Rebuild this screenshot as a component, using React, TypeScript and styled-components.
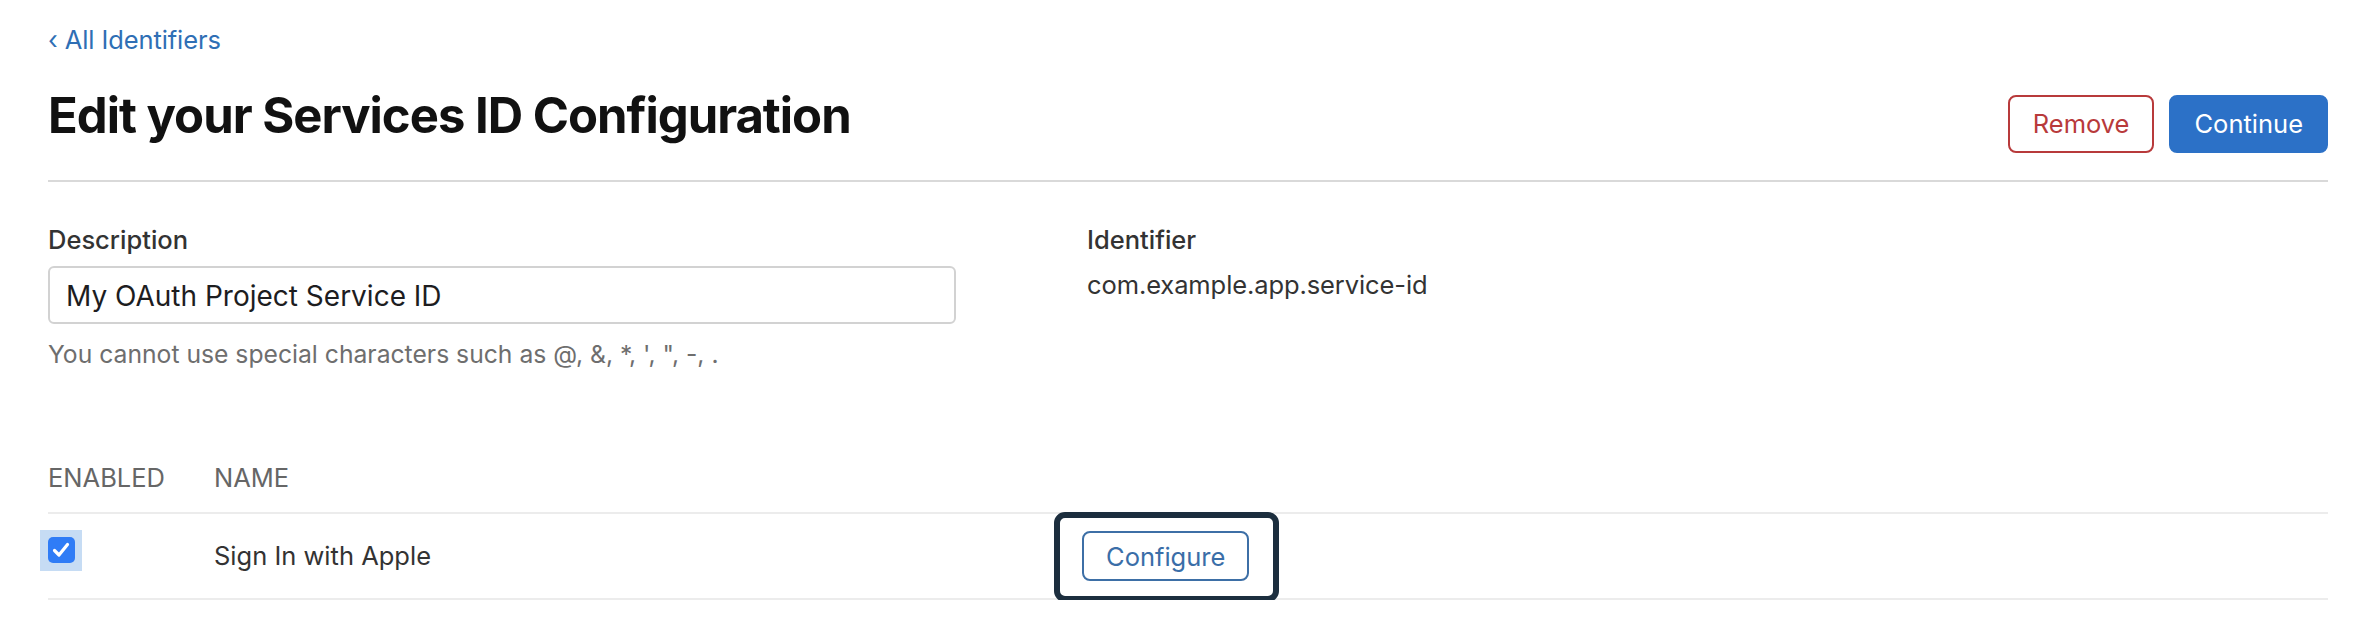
import React from "react";
import styled, { createGlobalStyle } from "styled-components";

const GlobalStyle = createGlobalStyle`
  html, body { margin: 0; padding: 0; background: #ffffff; }
  body {
    font-family: Inter, "Noto Sans", "Liberation Sans", sans-serif;
    color: #333333;
    -webkit-font-smoothing: antialiased;
  }
  * { box-sizing: border-box; }
`;

const Page = styled.div`
  padding: 22px 34px 0 48px;
  display: flex;
  flex-direction: column;
`;

const BackLink = styled.a`
  display: inline-flex;
  align-items: baseline;
  gap: 7px;
  font-size: 25.5px;
  line-height: 36px;
  color: #2f6fb5;
  text-decoration: none;
  align-self: flex-start;
  letter-spacing: -0.1px;
`;

const Chevron = styled.span`
  font-size: 25.5px;
`;

const HeaderRow = styled.div`
  margin-top: 28px;
  display: flex;
  align-items: baseline;
  justify-content: space-between;
`;

const Title = styled.h1`
  margin: 0;
  font-size: 49px;
  line-height: 60px;
  font-weight: 700;
  color: #111111;
  letter-spacing: -1px;
`;

const Actions = styled.div`
  display: flex;
  align-items: baseline;
  gap: 15px;
`;

const Button = styled.button<{ $variant: "danger" | "primary" | "outline" }>`
  font-family: inherit;
  font-size: 25.5px;
  height: ${(p) => (p.$variant === "outline" ? "50px" : "58px")};
  padding: 0 ${(p) => (p.$variant === "outline" ? "22px" : "23px")};
  border-radius: 8px;
  cursor: pointer;
  border: 2px solid
    ${(p) =>
      p.$variant === "danger" ? "#b83a3b" : p.$variant === "primary" ? "#2c71c7" : "#3d6fa6"};
  background: ${(p) => (p.$variant === "primary" ? "#2c71c7" : "#ffffff")};
  color: ${(p) =>
    p.$variant === "danger" ? "#b83a3b" : p.$variant === "primary" ? "#ffffff" : "#3a6ea8"};
  display: inline-flex;
  align-items: center;
  justify-content: center;
`;

const Divider = styled.hr`
  margin: 27px 0 0 0;
  border: none;
  height: 2px;
  background: #d9d9d9;
`;

const FormGrid = styled.div`
  margin-top: 40px;
  display: grid;
  grid-template-columns: 1039px 1fr;
`;

const Field = styled.div`
  display: flex;
  flex-direction: column;
`;

const Label = styled.label`
  font-size: 25.5px;
  line-height: 36px;
  font-weight: 500;
  color: #333333;
`;

const TextInput = styled.input`
  margin-top: 8px;
  width: 908px;
  height: 58px;
  padding: 3px 16px 0 16px;
  font-family: inherit;
  font-size: 28px;
  color: #1d1d1f;
  border: 2px solid #d2d2d2;
  border-radius: 6px;
  outline: none;
  background: #ffffff;
`;

const Helper = styled.div`
  margin-top: 13px;
  font-size: 24.7px;
  line-height: 34px;
  color: #6e6e6e;
`;

const Value = styled.div`
  margin-top: 9px;
  font-size: 25.5px;
  line-height: 36px;
  color: #333333;
  letter-spacing: -0.1px;
`;

const Table = styled.div`
  margin-top: 89px;
  display: flex;
  flex-direction: column;
`;

const TableRow = styled.div<{ $head?: boolean }>`
  display: grid;
  grid-template-columns: 166px 846px 1fr;
  align-items: ${(p) => (p.$head ? "end" : "center")};
  border-bottom: 2px solid #ececec;
  padding-bottom: ${(p) => (p.$head ? "16px" : "0")};
  height: ${(p) => (p.$head ? "auto" : "86px")};
`;

const HeadCell = styled.div`
  font-size: 25.5px;
  line-height: 36px;
  color: #666666;
  text-transform: uppercase;
`;

const Cell = styled.div`
  font-size: 25.5px;
  line-height: 36px;
  color: #333333;
`;

const CheckCell = styled.div`
  align-self: start;
  margin-top: 16px;
  margin-left: -8px;
`;

const CheckHighlight = styled.span`
  display: inline-flex;
  align-items: center;
  justify-content: center;
  width: 42px;
  height: 41px;
  background: #c6dcf4;
`;

const CheckBox = styled.span`
  display: inline-flex;
  align-items: center;
  justify-content: center;
  width: 27px;
  height: 26px;
  border-radius: 5px;
  background: #2f7cf6;
`;

const FocusRing = styled.span`
  display: inline-flex;
  padding: 13px 24px 15px 22px;
  border-radius: 5px;
  outline: 6px solid #1c2e3e;
  justify-self: start;
  margin-top: 3px;
`;

export default function App() {
  return (
    <>
      <GlobalStyle />
      <Page>
        <BackLink href="#">
          <Chevron>‹</Chevron>
          <span>All Identifiers</span>
        </BackLink>
        <HeaderRow>
          <Title>Edit your Services ID Configuration</Title>
          <Actions>
            <Button $variant="danger">Remove</Button>
            <Button $variant="primary">Continue</Button>
          </Actions>
        </HeaderRow>
        <Divider />
        <FormGrid>
          <Field>
            <Label>Description</Label>
            <TextInput defaultValue="My OAuth Project Service ID" />
            <Helper>You cannot use special characters such as @, &amp;, *, ', ", -, .</Helper>
          </Field>
          <Field>
            <Label>Identifier</Label>
            <Value>com.example.app.service-id</Value>
          </Field>
        </FormGrid>
        <Table>
          <TableRow $head>
            <HeadCell>Enabled</HeadCell>
            <HeadCell>Name</HeadCell>
            <HeadCell />
          </TableRow>
          <TableRow>
            <CheckCell>
              <CheckHighlight>
                <CheckBox>
                  <svg width="18" height="16" viewBox="0 0 18 16" fill="none">
                    <path
                      d="M2.5 8.5 L7 13 L15.5 2.5"
                      stroke="#ffffff"
                      strokeWidth="3.2"
                      strokeLinecap="round"
                      strokeLinejoin="round"
                    />
                  </svg>
                </CheckBox>
              </CheckHighlight>
            </CheckCell>
            <Cell>Sign In with Apple</Cell>
            <FocusRing>
              <Button $variant="outline">Configure</Button>
            </FocusRing>
          </TableRow>
        </Table>
      </Page>
    </>
  );
}
